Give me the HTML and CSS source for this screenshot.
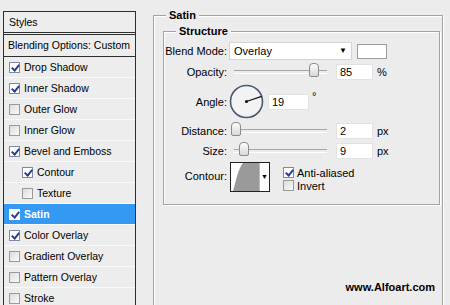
FILE: index.html
```html
<!DOCTYPE html>
<html lang="en">
<head>
    <meta charset="UTF-8">
    <title>Layer Style - Satin</title>
    <link rel="stylesheet" href="styles.css">
</head>
<body>
    <div class="dialog">
        <!-- Styles list on the left -->
        <div class="styles-list">
            <div class="list-head">Styles</div>
            <div class="list-blend">Blending Options: Custom</div>
            <div class="list-row"><span class="cb on"></span>Drop Shadow</div>
            <div class="list-row"><span class="cb on"></span>Inner Shadow</div>
            <div class="list-row"><span class="cb"></span>Outer Glow</div>
            <div class="list-row"><span class="cb"></span>Inner Glow</div>
            <div class="list-row"><span class="cb on"></span>Bevel and Emboss</div>
            <div class="list-row sub"><span class="cb on"></span>Contour</div>
            <div class="list-row sub"><span class="cb"></span>Texture</div>
            <div class="list-row selected"><span class="cb on"></span>Satin</div>
            <div class="list-row"><span class="cb on"></span>Color Overlay</div>
            <div class="list-row"><span class="cb"></span>Gradient Overlay</div>
            <div class="list-row"><span class="cb"></span>Pattern Overlay</div>
            <div class="list-row"><span class="cb"></span>Stroke</div>
        </div>

        <!-- Satin settings -->
        <div class="group satin">
            <div class="group-title">Satin</div>
            <div class="group structure">
                <div class="group-title">Structure</div>

                <div class="row first">
                    <label class="lbl">Blend Mode:</label>
                    <div class="select">Overlay<span class="arrow">&#9660;</span></div>
                    <div class="swatch"></div>
                </div>

                <div class="row">
                    <label class="lbl">Opacity:</label>
                    <div class="slider"><span class="thumb" style="left: 75px"></span></div>
                    <div class="field">85</div>
                    <span class="unit">%</span>
                </div>

                <div class="row angle-row">
                    <label class="lbl">Angle:</label>
                    <svg class="dial" width="35" height="35" viewBox="0 0 35 35">
                        <circle cx="17.5" cy="17.5" r="16" fill="#f3f3f3" stroke="#4a5870" stroke-width="1.6"/>
                        <line x1="17.5" y1="17.5" x2="32.6" y2="12.3" stroke="#111" stroke-width="1.3"/>
                        <circle cx="17.5" cy="17.5" r="1.6" fill="#111"/>
                    </svg>
                    <div class="field angle-field">19</div>
                    <span class="deg">&deg;</span>
                </div>

                <div class="row">
                    <label class="lbl">Distance:</label>
                    <div class="slider"><span class="thumb" style="left: -3px"></span></div>
                    <div class="field">2</div>
                    <span class="unit">px</span>
                </div>

                <div class="row">
                    <label class="lbl">Size:</label>
                    <div class="slider"><span class="thumb" style="left: 5px"></span></div>
                    <div class="field">9</div>
                    <span class="unit">px</span>
                </div>

                <div class="row contour-row">
                    <label class="lbl">Contour:</label>
                    <div class="contour">
                        <svg width="28" height="28" viewBox="0 0 28 28">
                            <rect width="28" height="28" fill="#fff"/>
                            <path d="M2 28 C 5 18, 7 6, 12 0 L 28 0 L 28 28 Z" fill="#9a9a9a"/>
                        </svg>
                        <span class="contour-arrow">&#9660;</span>
                    </div>
                    <div class="checks">
                        <div class="check-line"><span class="cb on"></span>Anti-aliased</div>
                        <div class="check-line"><span class="cb"></span>Invert</div>
                    </div>
                </div>
            </div>
            <div class="credit">www.Alfoart.com</div>
        </div>
    </div>
</body>
</html>
```

FILE: styles.css
```css
body {
    margin: 0;
    padding: 0;
    background-color: #ececec;
    font-family: 'Liberation Sans', Arial, sans-serif;
    font-size: 11px;
    color: #000;
    overflow: hidden;
}
.dialog {
    display: flex;
    align-items: flex-start;
    height: 305px;
}

/* left list */
.styles-list {
    margin: 11px 0 0 3px;
    width: 131px;
    border: 1px solid #2e2e2e;
    border-bottom: none;
    background: #ededed;
    font-size: 10.5px;
    white-space: nowrap;
}
.list-head {
    height: 20px;
    line-height: 20px;
    padding-left: 5px;
    border-bottom: 3px double #2e2e2e;
}
.list-blend {
    height: 21px;
    line-height: 21px;
    padding-left: 4px;
    border-bottom: 1px solid #2e2e2e;
}
.list-row {
    height: 20px;
    display: flex;
    align-items: center;
    padding-left: 5px;
    border-bottom: 1px solid #f9f9f9;
}
.list-row.sub {
    padding-left: 18px;
}
.list-row.selected {
    background: #3399f3;
    color: #fff;
    font-weight: bold;
}
.cb {
    width: 9px;
    height: 9px;
    border: 1px solid #9a9a9a;
    background: linear-gradient(135deg, #dcdcdc, #fafafa);
    margin-right: 4px;
    flex-shrink: 0;
    position: relative;
}
.cb.on {
    background: #fff;
    border-color: #7d8aa6;
}
.cb.on::after {
    content: "";
    position: absolute;
    left: 3px;
    top: 0px;
    width: 3px;
    height: 6px;
    border: solid #2b3f8f;
    border-width: 0 2px 2px 0;
    transform: rotate(40deg);
}
.selected .cb {
    border-color: #fff;
}

/* groups */
.group {
    border: 1px solid #a3a3a3;
    box-shadow: inset 1px 1px 0 #fff, 1px 1px 0 #fff;
}
.group-title {
    display: block;
    width: fit-content;
    margin: -7px 0 0 12px;
    padding: 0 3px;
    background: #ececec;
    font-weight: bold;
    line-height: 13px;
    font-size: 11px;
}
.satin {
    margin: 15px 0 0 17px;
    width: 288px;
    height: 300px;
}
.structure {
    margin: 9px 2px 0 9px;
    padding-bottom: 12px;
}

/* form rows */
.row {
    display: flex;
    align-items: center;
    height: 16px;
    margin-top: 4px;
}
.row.first {
    margin-top: 4px;
    height: 18px;
}
.lbl {
    width: 63px;
    text-align: right;
    margin-right: 2px;
}
.select {
    width: 117px;
    height: 16px;
    line-height: 16px;
    background: #fff;
    border: 1px solid #d4d4d4;
    padding-left: 4px;
    position: relative;
}
.arrow {
    position: absolute;
    right: 4px;
    top: 0;
    font-size: 8px;
}
.swatch {
    width: 28px;
    height: 13px;
    margin-left: 5px;
    background: #fff;
    border: 1px solid #9c9c9c;
}
.slider {
    position: relative;
    width: 93px;
    height: 2px;
    margin-left: 5px;
    border-top: 1px solid #a6a6a6;
    border-bottom: 1px solid #fff;
}
.thumb {
    position: absolute;
    top: -8px;
    width: 8px;
    height: 12px;
    border: 1px solid #8b8b8b;
    border-radius: 4px 4px 2px 2px;
    background: linear-gradient(#fdfdfd, #d8d8d8);
}
.field {
    width: 32px;
    height: 14px;
    line-height: 14px;
    margin-left: 9px;
    padding-left: 3px;
    background: #fff;
    border: 1px solid #e2e2e2;
}
.unit {
    margin-left: 4px;
}
.angle-row {
    height: 35px;
}
.dial {
    display: block;
}
.angle-field {
    width: 36px;
    margin-left: 4px;
}
.deg {
    align-self: flex-start;
    margin: 6px 0 0 3px;
}
.contour-row {
    height: 30px;
    margin-top: 3px;
    align-items: flex-start;
}
.contour-row .lbl {
    margin-top: 8px;
}
.contour {
    display: flex;
    margin-left: 1px;
    width: 38px;
    height: 28px;
    border: 1px solid #222;
    background: #fff;
}
.contour svg {
    display: block;
}
.contour-arrow {
    flex: 1;
    border-left: 1px solid #bbb;
    font-size: 7px;
    text-align: center;
    line-height: 28px;
}
.checks {
    margin-left: 13px;
    margin-top: 4px;
}
.check-line {
    display: flex;
    align-items: center;
    height: 13px;
}
.check-line .cb {
    margin-right: 3px;
}
.credit {
    margin-top: 76px;
    padding-right: 7px;
    text-align: right;
    font-weight: bold;
    font-size: 11px;
}
```
